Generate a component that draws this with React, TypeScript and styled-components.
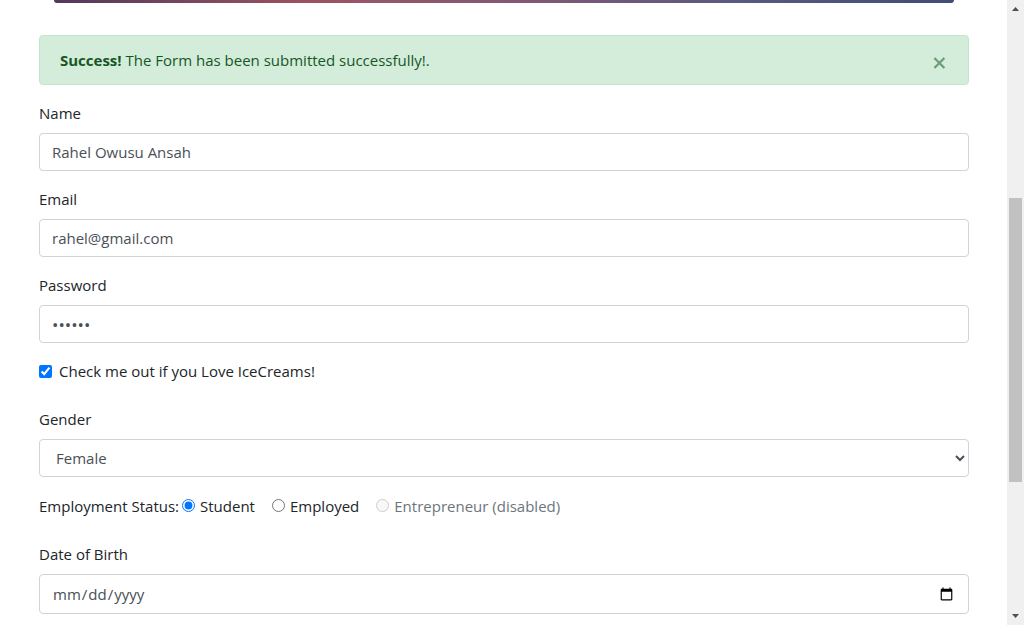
import React from "react";
import styled, { createGlobalStyle } from "styled-components";

const GlobalStyle = createGlobalStyle`
  *, *::before, *::after { box-sizing: border-box; }
  body {
    margin: 0;
    background: #fff;
    color: #212529;
    font-family: "Open Sans", "Noto Sans", sans-serif;
    font-size: 15px;
    line-height: 24px;
  }
  input, select, button { font: inherit; margin: 0; }
`;

const Page = styled.div`
  display: flex;
  height: 100vh;
  overflow: hidden;
`;

const Main = styled.main`
  flex: 1;
  min-width: 0;
  padding: 0 38px 0 39px;
`;

const Banner = styled.div`
  height: 3px;
  margin: 0 15px 32px;
  border-radius: 0 0 3px 3px;
  background: linear-gradient(90deg, #50395c 0%, #9c5260 28%, #95566a 36%, #7f5876 54%, #5a5a80 75%, #3f4d77 100%);
`;

const Alert = styled.div`
  display: flex;
  align-items: center;
  justify-content: space-between;
  height: 50px;
  margin-bottom: 16px;
  padding: 0 20px;
  border: 1px solid #c3e6cb;
  border-radius: 4px;
  background: #d4edda;
  color: #155724;
`;

const CloseButton = styled.button`
  display: flex;
  padding: 4px 2px 0 0;
  border: 0;
  background: none;
  color: #6b9d79;
`;

const Group = styled.div`
  display: flex;
  flex-direction: column;
  gap: 8px;
  margin-bottom: 16px;
`;

const Control = styled.input`
  width: 100%;
  height: ${(p) => (p.type === "date" ? "40px" : "38px")};
  padding: 6px 12px;
  border: 1px solid #ced4da;
  border-radius: 4px;
  background: #fff;
  color: #495057;
  font-size: ${(p) => (p.type === "password" ? "17px" : "15px")};
`;

const Select = styled.select`
  width: 100%;
  height: 38px;
  padding: 6px 12px;
  border: 1px solid #ced4da;
  border-radius: 4px;
  background: #fff;
  color: #495057;
`;

const CheckRow = styled.div`
  display: flex;
  align-items: center;
  gap: 7px;
  margin-bottom: 24px;
`;

const Tick = styled.input`
  flex: none;
  width: 13px;
  height: 13px;
`;

const StatusRow = styled.fieldset`
  display: flex;
  align-items: center;
  height: 25px;
  min-width: 0;
  margin: 0 0 24px;
  padding: 0;
  border: 0;
`;

const StatusTitle = styled.span`
  margin-right: 3px;
`;

const Option = styled.span<{ $muted?: boolean }>`
  display: flex;
  align-items: center;
  gap: 5px;
  margin-right: 17px;
  color: ${(p) => (p.$muted ? "#6c757d" : "inherit")};
`;

const ScrollBar = styled.div`
  display: flex;
  flex-direction: column;
  flex: none;
  width: 17px;
  height: 100vh;
  background: #f0f0f0;
`;

const ScrollArrow = styled.svg`
  display: block;
  flex: none;
  width: 17px;
  height: 17px;
  fill: #505050;
`;

const Track = styled.div`
  flex: 1;
  display: grid;
  grid-template-rows: 181fr 284fr 126fr;
`;

const Thumb = styled.div`
  grid-row: 2;
  margin: 0 2px;
  background: #c1c1c1;
`;

export default function App() {
  return (
    <Page>
      <GlobalStyle />
      <Main>
        <Banner />
        <Alert role="alert">
          <span>
            <strong>Success!</strong> The Form has been submitted successfully!.
          </span>
          <CloseButton type="button" aria-label="Close">
            <svg width="13" height="13" viewBox="0 0 13 13" fill="none" stroke="currentColor" strokeWidth="2.3">
              <path d="M1.4 2 L11.4 12 M11.4 2 L1.4 12" />
            </svg>
          </CloseButton>
        </Alert>
        <form>
          <Group>
            <label htmlFor="name">Name</label>
            <Control id="name" type="text" defaultValue="Rahel Owusu Ansah" />
          </Group>
          <Group>
            <label htmlFor="email">Email</label>
            <Control id="email" type="email" defaultValue="rahel@gmail.com" />
          </Group>
          <Group>
            <label htmlFor="password">Password</label>
            <Control id="password" type="password" defaultValue="scoops" />
          </Group>
          <CheckRow>
            <Tick id="icecream" type="checkbox" defaultChecked />
            <label htmlFor="icecream">Check me out if you Love IceCreams!</label>
          </CheckRow>
          <Group>
            <label htmlFor="gender">Gender</label>
            <Select id="gender" defaultValue="Female">
              <option>Male</option>
              <option>Female</option>
            </Select>
          </Group>
          <StatusRow aria-labelledby="status-title">
            <StatusTitle id="status-title">Employment Status:</StatusTitle>
            <Option>
              <Tick id="student" type="radio" name="status" defaultChecked />
              <label htmlFor="student">Student</label>
            </Option>
            <Option>
              <Tick id="employed" type="radio" name="status" />
              <label htmlFor="employed">Employed</label>
            </Option>
            <Option $muted>
              <Tick id="entrepreneur" type="radio" name="status" disabled />
              <label htmlFor="entrepreneur">Entrepreneur (disabled)</label>
            </Option>
          </StatusRow>
          <Group>
            <label htmlFor="birth">Date of Birth</label>
            <Control id="birth" type="date" />
          </Group>
        </form>
      </Main>
      <ScrollBar aria-hidden="true">
        <ScrollArrow viewBox="0 0 17 17">
          <path d="M5 11 L8.5 7 L12 11 Z" />
        </ScrollArrow>
        <Track>
          <Thumb />
        </Track>
        <ScrollArrow viewBox="0 0 17 17">
          <path d="M5 6 L8.5 10 L12 6 Z" />
        </ScrollArrow>
      </ScrollBar>
    </Page>
  );
}
